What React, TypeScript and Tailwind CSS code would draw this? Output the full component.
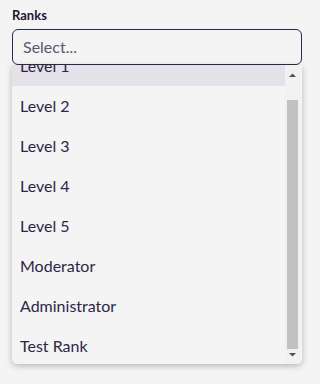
import { useEffect, useRef } from "react";

const ranks = [
  "Level 1",
  "Level 2",
  "Level 3",
  "Level 4",
  "Level 5",
  "Moderator",
  "Administrator",
  "Test Rank",
];

const App: React.FC = () => {
  const listRef = useRef<HTMLDivElement>(null);

  useEffect(() => {
    if (listRef.current) listRef.current.scrollTop = 23;
  }, []);

  return (
    <div
      className="w-[320px] h-[384px] bg-[#f4f4f4] px-3 pt-[7px]"
      style={{ fontFamily: "Lato, 'Noto Sans', sans-serif" }}
    >
      <label className="block text-[13px] font-bold text-[#1f1637] leading-4">
        Ranks
      </label>
      <div className="relative mt-[6px] w-[290px]">
        <div className="h-[36px] flex items-center border border-[#2b2a4c] rounded-[6px] px-[10px] bg-[#f4f4f4]">
          <span className="text-[16px] text-[#5c5670]">Select...</span>
        </div>
        <div className="absolute left-0 top-[36px] w-[290px] h-[299px] flex pr-[2px] rounded-b-[5px] bg-[#f4f4f4] shadow-[0_2px_6px_rgba(0,0,0,0.25)] overflow-hidden">
          <div ref={listRef} className="flex-1 h-full overflow-hidden py-1">
            {ranks.map((rank, i) => (
              <div
                key={rank}
                className={`h-10 flex items-center px-2 text-[16px] text-[#2d2646] ${
                  i === 0 ? "bg-[#e4e2e8]" : ""
                }`}
              >
                {rank}
              </div>
            ))}
          </div>
          {/* scrollbar */}
          <div className="w-[15px] h-full bg-[#f1f1f1] flex flex-col items-center">
            <svg width="15" height="15" viewBox="0 0 15 15" className="mt-[3px]">
              <path d="M4 9 L7.5 5.5 L11 9 Z" fill="#505050" />
            </svg>
            <div className="mt-[17px] w-[11px] h-[249px] bg-[#c1c1c1]" />
            <svg width="15" height="15" viewBox="0 0 15 15" className="-mt-[2px]">
              <path d="M4 6 L7.5 9.5 L11 6 Z" fill="#505050" />
            </svg>
          </div>
        </div>
      </div>
    </div>
  );
};

export default App;
